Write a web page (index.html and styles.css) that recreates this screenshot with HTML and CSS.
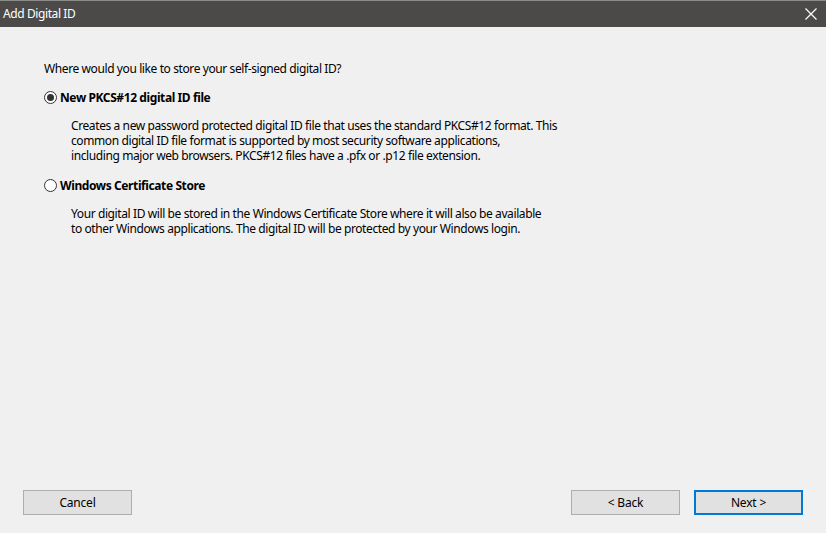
FILE: index.html
```html
<!DOCTYPE html>
<html>
<head>
<meta charset="utf-8">
<link rel="stylesheet" href="styles.css">
</head>
<body>
<div class="window">
  <div class="titlebar">
    <span class="title">Add Digital ID</span>
    <svg class="close" width="12" height="12" viewBox="0 0 12 12"><path d="M0.5 0.5 L11.5 11.5 M11.5 0.5 L0.5 11.5" stroke="#fff" stroke-width="1.2" fill="none"/></svg>
  </div>
  <div class="content">
    <p class="question">Where would you like to store your self-signed digital ID?</p>
    <div class="option">
      <span class="radio checked"></span>
      <span class="label">New PKCS#12 digital ID file</span>
    </div>
    <p class="desc">Creates a new password protected digital ID file that uses the standard PKCS#12 format. This<br>common digital ID file format is supported by most security software applications,<br>including major web browsers. PKCS#12 files have a .pfx or .p12 file extension.</p>
    <div class="option">
      <span class="radio"></span>
      <span class="label">Windows Certificate Store</span>
    </div>
    <p class="desc">Your digital ID will be stored in the Windows Certificate Store where it will also be available<br>to other Windows applications. The digital ID will be protected by your Windows login.</p>
  </div>
  <div class="footer">
    <button class="btn">Cancel</button>
    <div class="nav">
      <button class="btn">&lt; Back</button>
      <button class="btn default">Next &gt;</button>
    </div>
  </div>
</div>
</body>
</html>
```
FILE: styles.css
```css
* { box-sizing: border-box; }
html, body { margin: 0; padding: 0; }
body {
  font-family: "Noto Sans", "Open Sans", sans-serif;
  font-size: 12px;
  letter-spacing: -0.4px;
  color: #000;
  background: #f0f0f0;
}
.window {
  width: 826px;
  height: 533px;
  display: flex;
  flex-direction: column;
  background: #f0f0f0;
}
.titlebar {
  height: 27px;
  background: #4b4a48;
  border-top: 1px solid #8a8a88;
  display: flex;
  align-items: center;
  justify-content: space-between;
  padding: 0 9px 1px 3px;
  flex-shrink: 0;
}
.title { color: #fff; font-size: 12px; }
.close { display: block; }
.content {
  flex: 1;
  padding: 34px 0 0 44px;
}
.question { margin: 0 0 12px 0; line-height: 16px; }
.option {
  display: flex;
  align-items: center;
  height: 16px;
  gap: 3px;
}
.label { font-weight: bold; }
.radio {
  width: 13px;
  height: 13px;
  border: 1px solid #333;
  border-radius: 50%;
  background: #fff;
  position: relative;
  flex-shrink: 0;
}
.radio.checked::after {
  content: "";
  position: absolute;
  left: 2px; top: 2px;
  width: 7px; height: 7px;
  border-radius: 50%;
  background: #333;
}
.desc {
  margin: 13px 0 14px 27px;
  line-height: 15px;
}
.footer {
  display: flex;
  justify-content: space-between;
  padding: 0 23px 18px 23px;
  flex-shrink: 0;
}
.nav { display: flex; gap: 14px; }
.btn {
  width: 109px;
  height: 25px;
  background: #e1e1e1;
  border: 1px solid #adadad;
  font-family: inherit;
  font-size: 12px;
  letter-spacing: -0.2px;
  color: #000;
  padding: 0;
}
.btn.default { border: 2px solid #0078d7; }
```
